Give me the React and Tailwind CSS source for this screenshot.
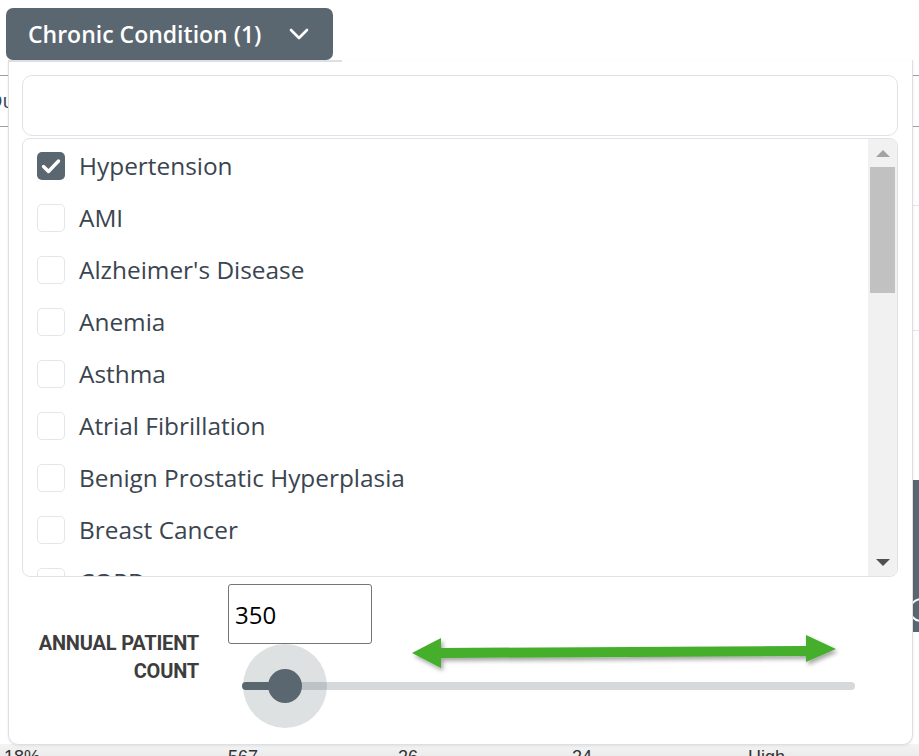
import React, { useState } from 'react';

const conditions = [
  'Hypertension',
  'AMI',
  "Alzheimer's Disease",
  'Anemia',
  'Asthma',
  'Atrial Fibrillation',
  'Benign Prostatic Hyperplasia',
  'Breast Cancer',
  'COPD',
];

const Chevron = () => (
  <svg width="22" height="14" viewBox="0 0 22 14" fill="none">
    <path d="M3 3l8 8 8-8" stroke="white" strokeWidth="2.6" strokeLinecap="round" strokeLinejoin="round" />
  </svg>
);

const Check = () => (
  <svg width="20" height="16" viewBox="0 0 20 16" fill="none">
    <path d="M2.5 8.5l5 5L17.5 3" stroke="white" strokeWidth="3.4" strokeLinecap="round" strokeLinejoin="round" />
  </svg>
);

const GreenArrow = () => (
  <svg width="440" height="50" viewBox="0 0 440 50" className="overflow-visible">
    <defs>
      <filter id="sh" x="-10%" y="-50%" width="120%" height="200%">
        <feDropShadow dx="2" dy="3" stdDeviation="2" floodColor="#000" floodOpacity="0.35" />
      </filter>
    </defs>
    <path
      d="M4 26 L33 11 L33 21 L398 19 L398 8 L428 22 L398 35 L398 29 L33 31 L33 41 Z"
      fill="#44ae2c"
      filter="url(#sh)"
    />
  </svg>
);

export default function App() {
  const [selected, setSelected] = useState({ Hypertension: true });
  const [count, setCount] = useState(350);

  return (
    <div className="relative w-[919px] h-[756px] overflow-hidden bg-white" style={{ fontFamily: '"Open Sans", "Liberation Sans", sans-serif' }}>
      {/* page behind the menu */}
      <div className="absolute left-0 top-[75px] w-[919px] h-[52px] border-t border-b border-[#9aa0a6] flex items-center">
        <span className="text-[20px] text-[#3a4550] -ml-[12px]">Du</span>
      </div>
      <div className="absolute right-0 top-[205px] w-[10px] h-[126px] border-t border-b border-[#e3e5e8]" />
      <div className="absolute right-0 top-[480px] w-[8px] h-[152px] bg-[#5b6770]" />
      <div className="absolute right-[-14px] top-[598px] w-[24px] h-[24px] rounded-full border-2 border-white bg-[#5b6770]" />
      <div className="absolute left-0 top-[744px] w-[919px] h-[20px] bg-gradient-to-b from-[#f4f4f4] to-[#e6e6e6] flex text-[18px] text-[#333] leading-[26px]" style={{ fontFamily: '"Liberation Sans", sans-serif' }}>
        <span className="w-[228px] pl-[4px]">18%</span>
        <span className="w-[170px]">567</span>
        <span className="w-[174px]">26</span>
        <span className="w-[176px]">24</span>
        <span>High</span>
      </div>

      {/* toggle button */}
      <button className="absolute left-[6px] top-[8px] w-[327px] h-[52px] rounded-[7px] bg-[#5b6770] flex items-center pl-[22px] gap-[27px] text-white text-[23px] font-semibold">
        <span>Chronic Condition (1)</span>
        <Chevron />
      </button>

      {/* dropdown menu */}
      <div className="absolute left-[8px] top-[60px] w-[905px] h-[685px] bg-white border border-[#dcdfe3] border-t-0 rounded-b-[10px] shadow-[0_1px_3px_rgba(0,0,0,0.08)]">
        <div className="absolute left-0 top-0 w-[333px] h-[2px] bg-[#dcdfe3]" />
        <div className="px-[13px] pt-[15px] flex flex-col gap-[2px]">
          <input className="w-[876px] h-[61px] rounded-[10px] border border-[#dfe3e7] outline-none px-3 text-[20px]" />
          <div className="w-[876px] h-[439px] rounded-[8px] border border-[#dfe3e7] flex overflow-hidden">
            <div className="flex-1 overflow-hidden pt-[1px]">
              {conditions.map((c) => (
                <label key={c} className="h-[52px] flex items-center gap-[14px] pl-[14px] cursor-pointer">
                  <span
                    onClick={() => setSelected((s) => ({ ...s, [c]: !s[c] }))}
                    className={`w-[28px] h-[28px] rounded-[5px] flex items-center justify-center shrink-0 ${
                      selected[c] ? 'bg-[#5b6770]' : 'border border-[#e4e7ea] bg-white'
                    }`}
                  >
                    {selected[c] && <Check />}
                  </span>
                  <span className="text-[24.4px] text-[#3a4550]">{c}</span>
                </label>
              ))}
            </div>
            <div className="w-[29px] bg-[#f1f1f1] flex flex-col items-center">
              <div className="h-[28px] flex items-center justify-center">
                <div className="w-0 h-0 border-l-[7px] border-r-[7px] border-b-[7px] border-l-transparent border-r-transparent border-b-[#a3a3a3]" />
              </div>
              <div className="w-[25px] h-[126px] bg-[#c1c1c1]" />
              <div className="flex-1" />
              <div className="h-[28px] flex items-center justify-center">
                <div className="w-0 h-0 border-l-[7px] border-r-[7px] border-t-[7px] border-l-transparent border-r-transparent border-t-[#505050]" />
              </div>
            </div>
          </div>
        </div>

        {/* patient count */}
        <div className="flex mt-[7px]">
          <div className="w-[190px] pt-[45px] text-right text-[20px] leading-[28px] font-bold text-[#3d3d3d] tracking-[-0.2px]" style={{ fontFamily: '"Liberation Sans Narrow", "Roboto", sans-serif' }}>
            ANNUAL PATIENT
            <br />
            COUNT
          </div>
          <div className="ml-[29px] relative">
            <input
              value={count}
              onChange={(e) => setCount(e.target.value)}
              className="w-[144px] h-[60px] border border-[#767676] rounded-[3px] px-[6px] text-[24px] text-black outline-none"
            />
            <div className="absolute left-[180px] top-[43px]">
              <GreenArrow />
            </div>
            <div className="relative mt-[38px] ml-[14px] w-[613px] h-[8px] rounded-full bg-[#d6d9dc]">
              <div className="absolute left-0 top-0 h-[8px] w-[44px] rounded-full bg-[#5b6770]" />
              <div className="absolute left-[1px] top-[-38px] w-[84px] h-[84px] rounded-full bg-[#5b6770]/20" />
              <div className="absolute left-[26px] top-[-13px] w-[34px] h-[34px] rounded-full bg-[#5b6770]" />
            </div>
          </div>
        </div>
      </div>
    </div>
  );
}
